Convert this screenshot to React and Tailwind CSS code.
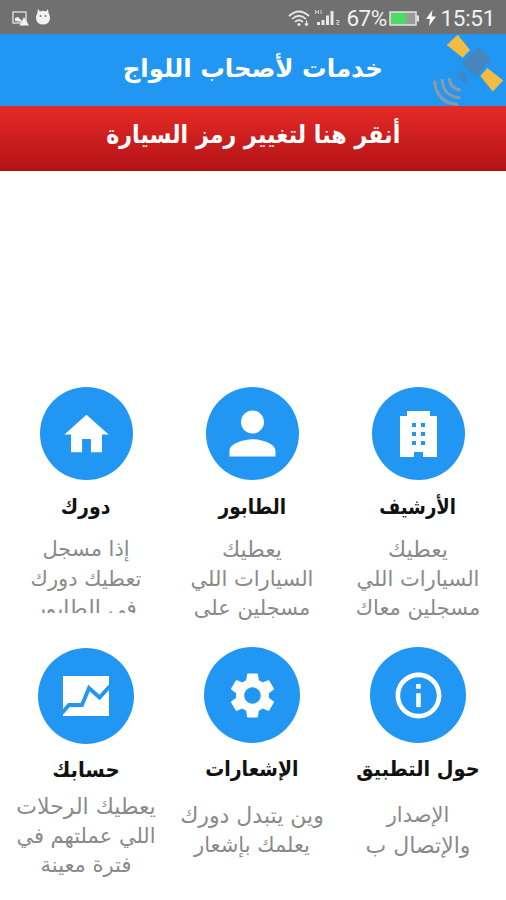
import clsx from "clsx";
import {
    MdHome,
    MdInfoOutline,
    MdPerson,
    MdSettings,
} from "react-icons/md";

const BuildingIcon = () => (
    <svg viewBox="0 0 37 46" className="h-[46px] w-[37px]" fill="currentColor">
        <path
            fillRule="evenodd"
            d="M7 0h23v5h7v41H23v-5h-9v5H0V5h7zM12 12v4h4v-4zm9 0v4h4v-4zM12 21v4h4v-4zm9 0v4h4v-4zM12 30v4h4v-4zm9 0v4h4v-4z"
        />
    </svg>
);

const ChartIcon = () => (
    <svg viewBox="0 0 46 40" className="h-[40px] w-[46px]">
        <path d="M0 0h46v40H0z" fill="#fff" />
        <path d="M-1 37l7-8h13l7-17 10.500 9.500L47 10" fill="none" stroke="#2196f3" strokeWidth="3.800" />
    </svg>
);

// Порядок справа налево
const items = [
    {
        title: "الأرشيف",
        titleClass: "scale-x-[0.86]",
        icon: <BuildingIcon />,
        lines: [{ text: "يعطيك", wide: true }, { text: "السيارات اللي" }, { text: "مسجلين معاك" }],
    },
    {
        title: "الطابور",
        titleClass: "scale-x-[0.88]",
        icon: <MdPerson className="size-[69px]" />,
        lines: [{ text: "يعطيك", wide: true }, { text: "السيارات اللي" }, { text: "مسجلين على" }],
    },
    {
        title: "دورك",
        titleClass: "scale-x-[0.9]",
        icon: <MdHome className="mt-px size-[53px]" />,
        lines: [{ text: "إذا مسجل" }, { text: "تعطيك دورك" }, { text: "في الطابور", wide: true }],
        cut: true,
    },
    {
        title: "حول التطبيق",
        titleClass: "scale-x-[0.92]",
        icon: <MdInfoOutline className="size-[55px]" />,
        lines: [{ text: "الإصدار" }, { text: "والإتصال ب", wide: true }],
        big: true,
    },
    {
        title: "الإشعارات",
        titleClass: "scale-x-[0.9]",
        icon: <MdSettings className="size-[55px]" />,
        lines: [{ text: "وين يتبدل دورك", wide: true }, { text: "يعلمك بإشعار" }],
        big: true,
    },
    {
        title: "حسابك",
        titleClass: "scale-x-[0.94]",
        icon: <ChartIcon />,
        lines: [{ text: "يعطيك الرحلات", wide: true }, { text: "اللي عملتهم في" }, { text: "فترة معينة" }],
        big: true,
        tight: true,
    },
];

function StatusBar() {
    return (
        <div className="flex h-[34px] items-center bg-[#707070] pt-0.5 pr-[11px] pl-3 font-[Roboto,sans-serif] text-[#f0f0f0]">
            <svg viewBox="0 0 17 15" className="h-[15px] w-[17px]">
                <path d="M1 1h13v11H1z" fill="#707070" stroke="#d5d5d5" strokeWidth="1.500" />
                <path d="M3 10V7l3-1 3 3 1 2z" fill="#f2f2f2" />
                <path d="M12 6l5 8.500H7.500z" fill="#f2f2f2" />
            </svg>
            <svg viewBox="0 0 14 16" className="mb-0.5 ml-[7px] h-4 w-3.5" fill="#f2f2f2">
                <path d="M2 0l2 2.500a7 7 0 0 1 6 0L12 0l.5 4c2 3 2 7-.5 10q-5 3-10 0c-2.500-3-2.500-7-.5-10z" />
                <circle cx="4.500" cy="7" r=".9" fill="#707070" />
                <circle cx="9.500" cy="7" r=".9" fill="#707070" />
            </svg>

            <div className="ml-auto flex items-center">
                <svg viewBox="0 0 22 17" className="h-[17px] w-[22px]" fill="none" stroke="#e8e8e8" strokeWidth="1.700">
                    <path d="M1 6q10-9 20 0M4 9q7-6.500 14 0M7 12q4-4 8 0" />
                    <circle cx="11" cy="14.500" r="1.500" fill="#e8e8e8" stroke="none" />
                    <path d="M18.500 10.500v5M16.800 13.500l1.700 2 1.700-2" strokeWidth="1.200" />
                </svg>
                <svg viewBox="0 0 28 18" className="ml-[4px] h-[18px] w-7" fill="#e8e8e8">
                    <path d="M1 1h1v4H1zM4 1h1v4H4zM2 2.500h2v1H2zM6.500 1h1v4h-1z" opacity=".8" />
                    <path d="M3 13h3v3H3zM7.500 11h3v5h-3zM12 6.500h3V16h-3zM16.500 2h3v14h-3z" />
                    <path d="M22 11.500h3v2h-2v2h2.500" fill="none" stroke="#d0d0d0" />
                </svg>
                <span className="ml-[4px] w-[40px] text-[22.500px] leading-none tracking-[-0.5px]">67%</span>
                <svg viewBox="0 0 30 15" className="ml-[3px] h-[15px] w-[30px]">
                    <path d="M1 1h26v13H1z" fill="#9b9b9b" stroke="#e4e4e4" strokeWidth="1.500" />
                    <path d="M2 2h15.500v11H2z" fill="#4cd964" />
                    <path d="M27.500 4.500H30v6h-2.500z" fill="#e4e4e4" />
                </svg>
                <svg viewBox="0 0 10 16" className="ml-[7px] h-4 w-2.5" fill="#fff">
                    <path d="M6.500 0L0 9h4l-1 7 7-9.500H5.500z" />
                </svg>
                <span className="ml-[4px] text-[22.500px] leading-none tracking-[-0.3px]">15:51</span>
            </div>
        </div>
    );
}

function Satellite() {
    return (
        <svg viewBox="0 0 74 72" className="absolute top-0 right-0 h-[72px] w-[74px]">
            <path d="M25.700 .7l-11 10.300 16 12.700L38 16z" fill="#f2bb41" />
            <path d="M55.300 34l16 12.500-10.600 11L48.300 42z" fill="#f2bb41" />
            <path d="M47.300 13.300l11.700 12-15.700 17.400-13.600-14z" fill="#4686bd" />
            <path d="M25.500 37q5-1 8 3.500 3 4 2.500 9-4 0-6-3-4-1-5.500-4 -1-3 1-5.500z" fill="#3a88ce" />
            <g fill="none" stroke="#8f98a6" strokeWidth="3">
                <path d="M17.300 44q1 11 11.500 12" />
                <path d="M10 45q1 18 18.500 18.700" />
                <path d="M2.500 46.500q2 22.500 23.500 24" />
            </g>
        </svg>
    );
}

function MenuItem({ title, titleClass, icon, lines, big, cut, tight }) {
    return (
        <div className={clsx("flex flex-col items-center", tight && "pt-px")}>
            <div
                className={clsx(
                    "flex shrink-0 items-center justify-center rounded-full bg-[#2196f3] text-white",
                    big ? "size-[96px]" : "size-[93px]",
                )}
            >
                {icon}
            </div>
            <h2
                className={clsx(
                    "h-8 text-[21px] leading-8 font-bold whitespace-nowrap text-[#111]",
                    big ? "mt-[10px]" : "mt-[11px]",
                    titleClass,
                )}
            >
                {title}
            </h2>
            <div
                className={clsx(
                    "overflow-hidden text-center text-[21px] leading-[29.500px] whitespace-nowrap text-[#8a8a8a]",
                    !big && "mt-3",
                    big && (tight ? "mt-[6px]" : "mt-4"),
                    cut ? "h-[78px]" : "h-[90px]",
                )}
            >
                {lines.map(({ text, wide }) => (
                    <p key={text} className={clsx(wide && "text-[22px]")}>
                        {text}
                    </p>
                ))}
            </div>
        </div>
    );
}

export default function App() {
    return (
        <div className="h-[900px] w-[506px] overflow-hidden bg-white font-['DejaVu_Sans',sans-serif]">
            <StatusBar />
            <header className="relative flex h-[72px] items-center justify-center bg-[#2196f3]">
                <h1 dir="rtl" className="scale-x-[0.98] pb-0.5 text-[25px] font-bold whitespace-nowrap text-white">
                    خدمات لأصحاب اللواج
                </h1>
                <Satellite />
            </header>
            <button
                dir="rtl"
                className="flex h-[65px] w-full items-center justify-center border-b-2 border-[#b01015] bg-linear-to-b from-[#e52a27] to-[#b51317] pb-1.5 text-[25px] font-bold whitespace-nowrap text-white"
            >
                <span className="inline-block scale-x-[0.89]">أنقر هنا لتغيير رمز السيارة</span>
            </button>
            <main dir="rtl" className="mt-[216px] grid grid-cols-3 grid-rows-[260px_250px] pr-[5px] pl-[3px]">
                {items.map((item) => (
                    <MenuItem key={item.title} {...item} />
                ))}
            </main>
        </div>
    );
}
